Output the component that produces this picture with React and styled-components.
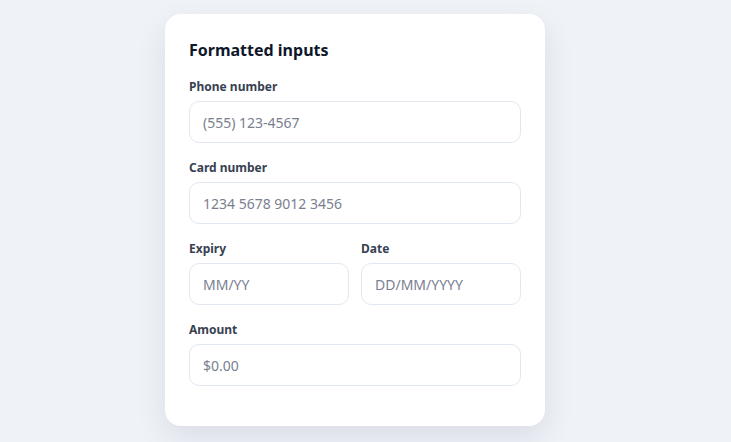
import React from 'react';
import styled, { createGlobalStyle } from 'styled-components';

const GlobalStyle = createGlobalStyle`
    html, body {
        margin: 0;
        padding: 0;
        background: #eff2f7;
        font-family: "Segoe UI", "Noto Sans", "Open Sans", sans-serif;
    }
    * { box-sizing: border-box; }
`;

const Page = styled.div`
    display: flex;
    justify-content: center;
    align-items: flex-start;
    padding: 14px 21px 16px 0;
`;

const Card = styled.div`
    width: 380px;
    background: #ffffff;
    border-radius: 16px;
    padding: 24px;
    box-shadow: 0 12px 32px rgba(15, 23, 42, 0.09);
`;

const Title = styled.h2`
    margin: 0 0 16px;
    font-size: 16px;
    line-height: 24px;
    font-weight: 700;
    color: #0f172a;
`;

const Field = styled.div`
    display: flex;
    flex-direction: column;
    gap: 6px;
    margin-bottom: 16px;
    min-width: 0;

    &:last-child {
        margin-bottom: 0;
    }
`;

const Label = styled.label`
    font-size: 12px;
    line-height: 17px;
    font-weight: 700;
    color: #374151;
`;

const Input = styled.input`
    width: 100%;
    height: 42px;
    border: 1px solid #e2e8f0;
    border-radius: 10px;
    padding: 0 13px;
    font-family: inherit;
    font-size: 14px;
    color: #0f172a;
    outline: none;
    background: #fff;

    &::placeholder {
        color: #7a8090;
    }
`;

const Row = styled.div`
    display: grid;
    grid-template-columns: 1fr 1fr;
    gap: 12px;
    margin-bottom: 16px;

    & > ${Field} {
        margin-bottom: 0;
    }
`;

const Form = styled.div`
    padding-bottom: 16px;
`;

const fields = [
    { label: 'Phone number', placeholder: '(555) 123-4567' },
    { label: 'Card number', placeholder: '1234 5678 9012 3456' },
];

export default function App() {
    return (
        <>
            <GlobalStyle />
            <Page>
                <Card>
                    <Title>Formatted inputs</Title>
                    <Form>
                        {fields.map(f => (
                            <Field key={f.label}>
                                <Label>{f.label}</Label>
                                <Input placeholder={f.placeholder} />
                            </Field>
                        ))}
                        <Row>
                            <Field>
                                <Label>Expiry</Label>
                                <Input placeholder="MM/YY" />
                            </Field>
                            <Field>
                                <Label>Date</Label>
                                <Input placeholder="DD/MM/YYYY" />
                            </Field>
                        </Row>
                        <Field>
                            <Label>Amount</Label>
                            <Input placeholder="$0.00" />
                        </Field>
                    </Form>
                </Card>
            </Page>
        </>
    );
}
